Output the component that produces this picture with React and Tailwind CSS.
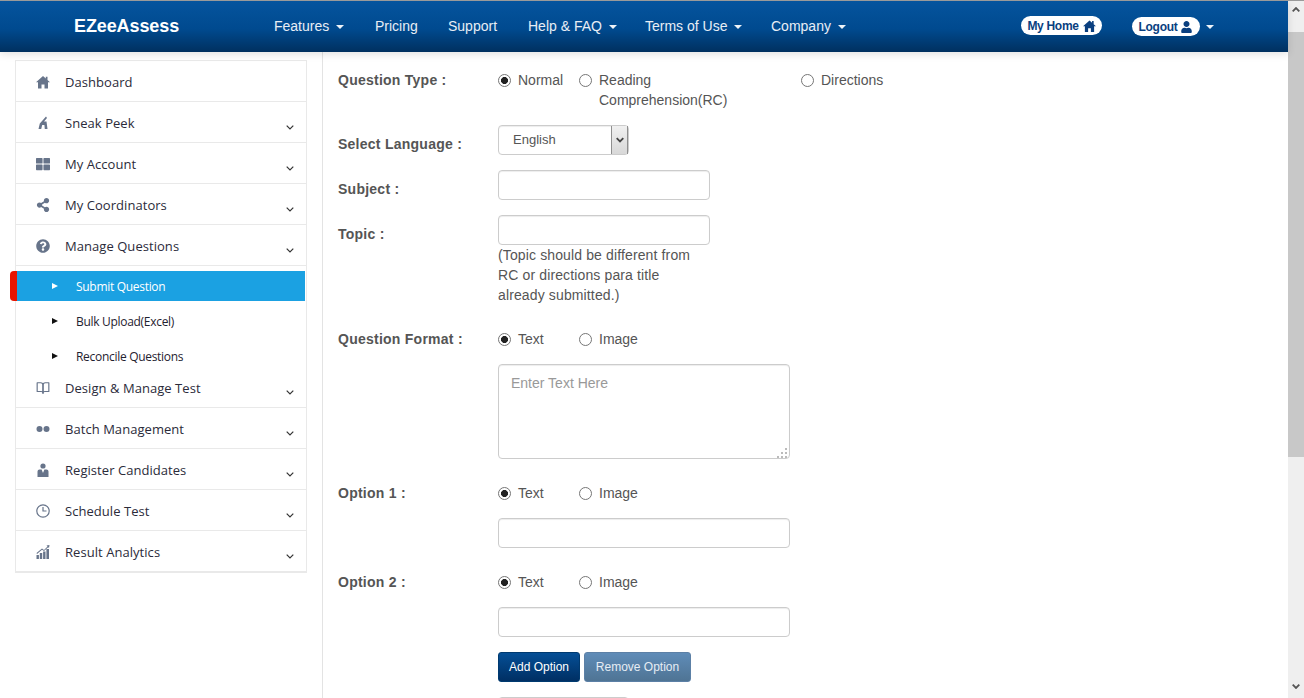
import React from 'react';
import { FaThLarge, FaShareAlt, FaQuestionCircle, FaUser } from 'react-icons/fa';
import { FiBookOpen } from 'react-icons/fi';

const HouseIcon = ({ className }) => (
  <svg viewBox="0 0 14 13" className={className} fill="currentColor">
    <path d="M7 0.5 L9.8 3 V1.2 H11.5 V4.5 L14 6.8 L12 6.8 V13 H8.5 V9 H5.5 V13 H2 V6.8 L0 6.8 Z" />
  </svg>
);

const RoadIcon = ({ className }) => (
  <svg viewBox="0 0 14 14" className={className} fill="currentColor">
    <path d="M10 0.5 L11 2 L8 5.5 L10.5 5.5 L11.5 13 H8.8 L8.4 9 H6.2 L5.2 13 H2.5 L3.8 7.5 Z" />
  </svg>
);

const TwoDots = ({ className }) => (
  <svg viewBox="0 0 14 14" className={className} fill="currentColor">
    <circle cx="3.5" cy="7" r="3" />
    <circle cx="10.5" cy="7" r="3" />
  </svg>
);

const PersonIcon = ({ className }) => (
  <svg viewBox="0 0 12 14" className={className} fill="currentColor">
    <circle cx="6" cy="3" r="2.6" />
    <path d="M0.5 14 V8.5 Q0.5 6.5 2.5 6.5 H4.6 L6 10 L7.4 6.5 H9.5 Q11.5 6.5 11.5 8.5 V14 Z" />
  </svg>
);

const ClockIcon = ({ className }) => (
  <svg viewBox="0 0 14 14" className={className} fill="none" stroke="currentColor" strokeWidth="1.2">
    <circle cx="7" cy="7" r="6.2" />
    <path d="M7 3 V7 H10.5" />
  </svg>
);

const Bars = ({ className }) => (
  <svg viewBox="0 0 14 14" className={className} fill="currentColor">
    <rect x="0.5" y="10" width="2.4" height="4" />
    <rect x="3.8" y="8" width="2.4" height="6" />
    <rect x="7.1" y="6.5" width="2.4" height="7.5" />
    <rect x="10.4" y="4" width="2.6" height="10" />
    <path d="M0.5 8 L6 3.5 L8 5 L11.5 1.5 L10.5 0.5 L13.5 0 L13 3 L12.2 2.2 L8 6 L6 4.8 L1 9 Z" />
  </svg>
);

const Chevron = () => (
  <svg viewBox="0 0 8 5" className="w-[8px] h-[5px] text-[#333]" fill="none" stroke="currentColor" strokeWidth="1.2">
    <path d="M0.7 0.7 L4 4 L7.3 0.7" />
  </svg>
);

const Caret = () => (
  <span className="inline-block ml-[7px] align-middle w-0 h-0 border-x-[4px] border-x-transparent border-t-[4px] border-t-[#eef3f8]" />
);

const navItems = [
  { label: 'Features', caret: true, width: 'w-[101px]' },
  { label: 'Pricing', width: 'w-[73px]' },
  { label: 'Support', width: 'w-[80px]' },
  { label: 'Help & FAQ', caret: true, width: 'w-[117px]' },
  { label: 'Terms of Use', caret: true, width: 'w-[126px]' },
  { label: 'Company', caret: true, width: 'w-[105px]' },
];

const MenuRow = ({ icon: Icon, label, chevron = true, short = false, iconClass = 'w-[14px] h-[14px]' }) => (
  <div className={`flex items-end pb-[9px] pl-[20px] pr-[12px] border-b border-[#e9e9e9] ${short ? 'h-[37px]' : 'h-[41px]'}`}>
    <span className="w-[14px] h-[20px] flex items-center justify-center text-[#67748a]">
      <Icon className={iconClass} />
    </span>
    <span className="ml-[15px] flex-1 text-[13px] leading-[20px] tracking-[0.05px] text-[#2b2b3a]">{label}</span>
    {chevron && <span className="h-[20px] flex items-end pb-[3px]"><Chevron /></span>}
  </div>
);

const SubItem = ({ label, active }) => (
  <div className={`relative ml-[1px] h-[30px] flex items-center pl-[35px] text-[12px] tracking-[-0.3px] ${active ? 'bg-[#1ba1e2] text-white' : 'text-[#1f2230]'}`}>
    {active && <span className="absolute left-[-7px] top-0 bottom-0 w-[7px] bg-[#e81500] rounded-l-[4px]" />}
    <span className={`w-0 h-0 border-y-[3px] border-y-transparent border-l-[6px] ${active ? 'border-l-white' : 'border-l-[#111]'}`} />
    <span className="ml-[18px] pt-[2px]">{label}</span>
  </div>
);

const Sidebar = () => (
  <aside className="w-[323px] shrink-0 border-r border-[#e3e3e3] pl-[15px] pr-[15px] pt-[8px] font-['Open_Sans',sans-serif]">
    <div className="w-[292px] border border-[#e9e9e9] border-b-2">
      <MenuRow icon={HouseIcon} label="Dashboard" chevron={false} />
      <MenuRow icon={RoadIcon} label="Sneak Peek" />
      <MenuRow icon={FaThLarge} label="My Account" />
      <MenuRow icon={FaShareAlt} label="My Coordinators" />
      <MenuRow icon={FaQuestionCircle} label="Manage Questions" />
      <div className="pt-[5px] pr-[1px] flex flex-col gap-[5px]">
        <SubItem label="Submit Question" active />
        <SubItem label="Bulk Upload(Excel)" />
        <SubItem label="Reconcile Questions" />
      </div>
      <MenuRow icon={FiBookOpen} label="Design & Manage Test" short />
      <MenuRow icon={TwoDots} label="Batch Management" />
      <MenuRow icon={PersonIcon} label="Register Candidates" iconClass="w-[12px] h-[14px]" />
      <MenuRow icon={ClockIcon} label="Schedule Test" />
      <div className="[&>div]:border-b-0 [&>div]:h-[40px]">
        <MenuRow icon={Bars} label="Result Analytics" />
      </div>
    </div>
  </aside>
);

const Radio = ({ label, checked, name, className = '' }) => (
  <label className={`flex items-start gap-[7px] text-[14px] leading-[20px] text-[#555] ${className}`}>
    <input
      type="radio"
      name={name}
      defaultChecked={checked}
      className="appearance-none shrink-0 mt-[3.5px] w-[13px] h-[13px] rounded-full border border-[#767676] bg-white checked:bg-[radial-gradient(circle,#222_0,#222_3.2px,#fff_3.8px)]"
    />
    <span>{label}</span>
  </label>
);

const Label = ({ children, className = '' }) => (
  <div className={`w-[160px] shrink-0 text-[14px] leading-[20px] font-bold tracking-[0.25px] text-[#555] ${className}`}>{children}</div>
);

const TextInput = ({ className = 'w-[292px]' }) => (
  <input
    type="text"
    className={`block h-[30px] border border-[#ccc] rounded-[4px] bg-white shadow-[inset_0_1px_1px_rgba(0,0,0,0.075)] ${className}`}
  />
);

const FormatRadios = ({ name }) => (
  <div className="flex">
    <Radio name={name} label="Text" checked className="w-[81px]" />
    <Radio name={name} label="Image" />
  </div>
);

const SelectBox = ({ label }) => (
  <div className="w-[131px] h-[30px] flex border border-[#ccc] rounded-[4px] bg-white text-[13px] text-[#555] shadow-[inset_0_1px_1px_rgba(0,0,0,0.075)]">
    <span className="flex-1 pl-[14px] leading-[28px]">{label}</span>
    <span className="w-[17px] flex items-center justify-center border-l border-r border-[#8f8f8f] bg-[linear-gradient(#f0f0f0,#d8d8d8)]">
      <svg viewBox="0 0 8 5" className="w-[8px] h-[6px] text-[#444]" fill="none" stroke="currentColor" strokeWidth="1.8">
        <path d="M0.7 0.7 L4 4 L7.3 0.7" />
      </svg>
    </span>
  </div>
);

const Form = () => (
  <main className="flex-1 min-w-0 pl-[15px] pt-[18px] font-['Liberation_Sans',Arial,sans-serif]">
    <div className="flex h-[55px]">
      <Label>Question Type :</Label>
      <div className="flex items-start">
        <Radio name="qtype" label="Normal" checked className="w-[81px]" />
        <Radio name="qtype" label="Reading Comprehension(RC)" className="w-[222px] [&>span]:w-[140px]" />
        <Radio name="qtype" label="Directions" />
      </div>
    </div>
    <div className="flex">
      <Label className="pt-[9px]">Select Language :</Label>
      <SelectBox label="English" />
    </div>
    <div className="flex mt-[15px]">
      <Label className="pt-[9px]">Subject :</Label>
      <TextInput className="w-[212px]" />
    </div>
    <div className="flex mt-[15px]">
      <Label className="pt-[9px]">Topic :</Label>
      <div>
        <TextInput className="w-[212px]" />
        <p className="w-[200px] text-[14px] leading-[20px] tracking-[0.13px] text-[#555]">
          (Topic should be different from RC or directions para title already submitted.)
        </p>
      </div>
    </div>
    <div className="flex mt-[24px]">
      <Label>Question Format :</Label>
      <FormatRadios name="qformat" />
    </div>
    <div className="ml-[160px] mt-[15px] relative w-[292px]">
      <textarea
        placeholder="Enter Text Here"
        className="block w-full h-[95px] px-[12px] py-[8px] resize-none border border-[#ccc] rounded-[4px] text-[14px] leading-[20px] placeholder:text-[#999] shadow-[inset_0_1px_1px_rgba(0,0,0,0.075)]"
      />
      <svg viewBox="0 0 13 11" className="absolute right-[1px] bottom-[1px] w-[13px] h-[11px] text-[#bbb]" fill="currentColor">
        <rect x="9" y="1" width="2" height="2" />
        <rect x="5" y="5" width="2" height="2" />
        <rect x="9" y="5" width="2" height="2" />
        <rect x="1" y="9" width="2" height="2" />
        <rect x="5" y="9" width="2" height="2" />
        <rect x="9" y="9" width="2" height="2" />
      </svg>
    </div>
    <div className="flex mt-[24px]">
      <Label>Option 1 :</Label>
      <FormatRadios name="opt1" />
    </div>
    <div className="ml-[160px] mt-[15px]"><TextInput /></div>
    <div className="flex mt-[24px]">
      <Label>Option 2 :</Label>
      <FormatRadios name="opt2" />
    </div>
    <div className="ml-[160px] mt-[15px]"><TextInput /></div>
    <div className="ml-[160px] mt-[15px] flex gap-[4px]">
      <button className="h-[30px] w-[82px] rounded-[3px] border border-[#003a70] bg-[linear-gradient(#054f96,#002f63)] text-[12px] text-white">Add Option</button>
      <button className="h-[30px] w-[107px] rounded-[3px] border border-[#5c80a6] bg-[linear-gradient(#5f8cb8,#4f7494)] text-[12px] text-[#e6edf4]">Remove Option</button>
    </div>
    <div className="ml-[160px] mt-[15px]">
      <SelectBox />
    </div>
  </main>
);

const Scrollbar = () => (
  <div className="w-[16px] shrink-0 bg-[#efefef] flex flex-col">
    <div className="h-[31px] flex items-start justify-center pt-[6px]">
      <svg viewBox="0 0 8 5" className="w-[8px] h-[5px] text-[#555]" fill="none" stroke="currentColor" strokeWidth="1.8">
        <path d="M0.7 4.3 L4 1 L7.3 4.3" />
      </svg>
    </div>
    <div className="h-[425px] bg-[#c8c8c8]" />
    <div className="mt-auto h-[14px] flex items-start justify-center">
      <svg viewBox="0 0 8 5" className="w-[8px] h-[5px] text-[#555]" fill="none" stroke="currentColor" strokeWidth="1.8">
        <path d="M0.7 0.7 L4 4 L7.3 0.7" />
      </svg>
    </div>
  </div>
);

const Header = () => (
  <header className="relative z-10 h-[51px] shrink-0 bg-[linear-gradient(#05549e,#004a8f_55%,#00305f)] shadow-[0_2px_8px_rgba(0,0,0,0.12)] flex items-center text-[#e8eef5] font-['Liberation_Sans',Arial,sans-serif]">
    <div className="w-[259px] pl-[74px] text-[18px] font-bold tracking-[-0.1px] text-white">EZeeAssess</div>
    <nav className="flex text-[14px]">
      {navItems.map((item) => (
        <a key={item.label} className={`pl-[15px] whitespace-nowrap ${item.width}`}>
          {item.label}
          {item.caret && <Caret />}
        </a>
      ))}
    </nav>
    <div className="ml-auto flex items-center pr-[74px]">
      <span className="w-[81px] h-[19px] rounded-full bg-white text-[12px] font-bold tracking-[-0.3px] text-[#0a3f7f] flex items-center justify-center gap-[4px] -translate-y-[1px]">
        My Home <HouseIcon className="w-[13px] h-[12px]" />
      </span>
      <span className="ml-[30px] -mr-[1px] w-[68px] h-[19px] rounded-full bg-white text-[12px] font-bold tracking-[-0.3px] text-[#0a3f7f] flex items-center justify-center gap-[3px]">
        Logout <FaUser className="w-[13px] h-[12px]" />
      </span>
      <Caret />
    </div>
  </header>
);

export default function App() {
  return (
    <div className="h-[698px] flex flex-col overflow-hidden bg-white border-t border-[#9a9a9a]">
      <div className="flex-1 min-h-0 flex">
        <div className="flex-1 min-w-0 flex flex-col">
          <Header />
          <div className="flex-1 flex min-h-0 overflow-hidden">
            <Sidebar />
            <Form />
          </div>
        </div>
        <Scrollbar />
      </div>
    </div>
  );
}
